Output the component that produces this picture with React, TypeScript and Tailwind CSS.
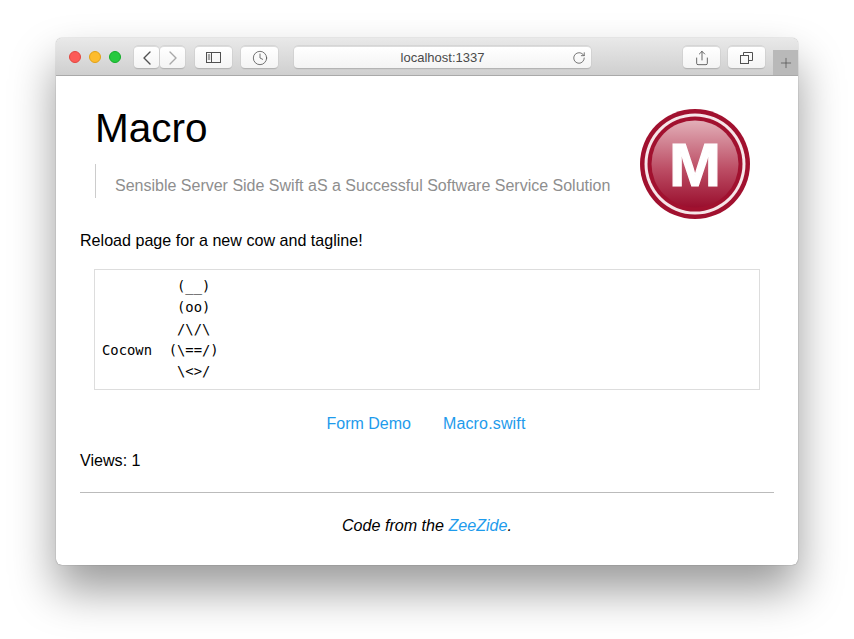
import { ChevronLeft, ChevronRight, Clock, RotateCw, Share, Plus } from 'lucide-react';

const COW = `         (__)
         (oo)
         /\\/\\
Cocown  (\\==/)
         \\<>/`;

function ToolButton({ children, className }: { children: React.ReactNode; className: string }) {
  return (
    <div className={`flex h-[23px] items-center justify-center rounded-[4px] border-t border-t-[#dcdcdc] border-b border-b-[#b4b4b4] bg-gradient-to-b from-[#ffffff] to-[#f4f4f4] shadow-[0_0_0_0.5px_#c8c8c8] ${className}`}>
      {children}
    </div>
  );
}

function Logo() {
  return (
    <svg width="110" height="110" viewBox="0 0 110 110">
      <defs>
        <linearGradient id="macro-fill" x1="0" y1="0" x2="0" y2="1">
          <stop offset="0" stopColor="#e2afb8" />
          <stop offset="0.55" stopColor="#bd4f66" />
          <stop offset="1" stopColor="#9a0f2e" />
        </linearGradient>
      </defs>
      <circle cx="55" cy="55" r="55" fill="#a1112f" />
      <circle cx="55" cy="55" r="50.5" fill="#f6e6e9" />
      <circle cx="55" cy="55" r="47.5" fill="#a1112f" />
      <circle cx="55" cy="55" r="43.5" fill="url(#macro-fill)" />
      <text x="55" y="76.5" textAnchor="middle" textLength="52" lengthAdjust="spacingAndGlyphs" fill="#ffffff" stroke="#ffffff" strokeWidth="1.2" fontFamily="'Liberation Sans', sans-serif" fontWeight="700" fontSize="62">M</text>
    </svg>
  );
}

export default function App() {
  return (
    <div className="h-[639px] w-[854px] overflow-hidden bg-white pt-[38px] pl-[56px] font-['Liberation_Sans',sans-serif]">
      <div className="flex h-[527px] w-[742px] flex-col overflow-hidden rounded-[6px] bg-white shadow-[0_25px_45px_rgba(0,0,0,0.4),0_0_1px_rgba(0,0,0,0.6)]">
        {/* Safari toolbar */}
        <div className="flex h-[38px] shrink-0 items-start border-b border-[#a9a9a9] bg-gradient-to-b from-[#e9e9e9] to-[#cfcfcf] pl-[13px]">
          <div className="mt-[13px] flex gap-[8px]">
            <div className="h-3 w-3 rounded-full border-[0.5px] border-[#e2463f] bg-[#fc5b57]" />
            <div className="h-3 w-3 rounded-full border-[0.5px] border-[#e1a116] bg-[#fdbc2e]" />
            <div className="h-3 w-3 rounded-full border-[0.5px] border-[#12ac28] bg-[#27c93f]" />
          </div>
          <div className="mt-2 ml-[13px] flex gap-px">
            <ToolButton className="w-[25px]"><ChevronLeft size={24} strokeWidth={1.4} className="text-[#505050]" /></ToolButton>
            <ToolButton className="w-[25px]"><ChevronRight size={24} strokeWidth={1.4} className="text-[#a8a8a8]" /></ToolButton>
          </div>
          <ToolButton className="mt-2 ml-[10px] w-[37px]">
            <svg width="15" height="11" viewBox="0 0 15 11" fill="none" stroke="#505050">
              <rect x="0.5" y="0.5" width="14" height="10" />
              <path d="M5.5 0.5v10M1.8 3h2.4M1.8 5h2.4M1.8 7h2.4" />
            </svg>
          </ToolButton>
          <ToolButton className="mt-2 ml-[9px] w-[37px]"><Clock size={16} strokeWidth={1.2} className="text-[#505050]" /></ToolButton>
          <ToolButton className="relative mt-2 ml-[16px] w-[297px] text-[13px] text-[#4a4a4a]">
            <span>localhost:1337</span>
            <RotateCw size={14} strokeWidth={1.4} className="absolute right-[5px] top-[4px] text-[#5c5c5c]" />
          </ToolButton>
          <ToolButton className="mt-2 ml-[92px] w-[37px]"><Share size={16} strokeWidth={1.3} className="text-[#505050]" /></ToolButton>
          <ToolButton className="mt-2 ml-[8px] w-[37px]">
            <svg width="13" height="12" viewBox="0 0 13 12" fill="none" stroke="#505050">
              <rect x="0.5" y="3.5" width="8" height="8" />
              <path d="M3.5 3.5v-3h9v8h-4" />
            </svg>
          </ToolButton>
          <div className="mt-[12px] ml-[8px] flex h-[25px] w-[25px] items-center justify-center bg-[#b9b9b9]">
            <Plus size={16} strokeWidth={1.1} className="text-[#505050]" />
          </div>
        </div>

        {/* Page */}
        <div className="flex-1 px-[24px] text-[16.1px] text-black">
          <div className="flex items-start pl-[15px]">
            <div className="flex-1">
              <h1 className="mt-[23px] text-[40.5px] leading-[58px]">Macro</h1>
              <div className="mt-[7px] h-[34px] border-l border-[#cccccc] pl-[19px] text-[16px] leading-[44px] text-[#8e8e8e]">
                Sensible Server Side Swift aS a Successful Software Service Solution
              </div>
            </div>
            <div className="mt-[33px] mr-[24px]"><Logo /></div>
          </div>
          <p className="mt-[9px] leading-[24px]">Reload page for a new cow and tagline!</p>
          <pre className="mt-[17px] ml-[14px] h-[121px] w-[666px] border border-[#dddddd] px-[7px] pt-[6px] font-['DejaVu_Sans_Mono',monospace] text-[13.85px] leading-[21.3px]">{COW}</pre>
          <div className="mt-[22px] flex justify-center gap-[32px] pr-[2px] text-[16px] leading-[24px] text-[#1e9bec]">
            <span>Form Demo</span>
            <span className="tracking-[0.15px]">Macro.swift</span>
          </div>
          <p className="mt-[12px] leading-[24px]">Views: 1</p>
          <hr className="mt-[20px] border-[#bbbbbb]" />
          <p className="mt-[20px] text-center italic leading-[24px]">
            Code from the <span className="text-[#1e9bec]">ZeeZide</span>.
          </p>
        </div>
      </div>
    </div>
  );
}
